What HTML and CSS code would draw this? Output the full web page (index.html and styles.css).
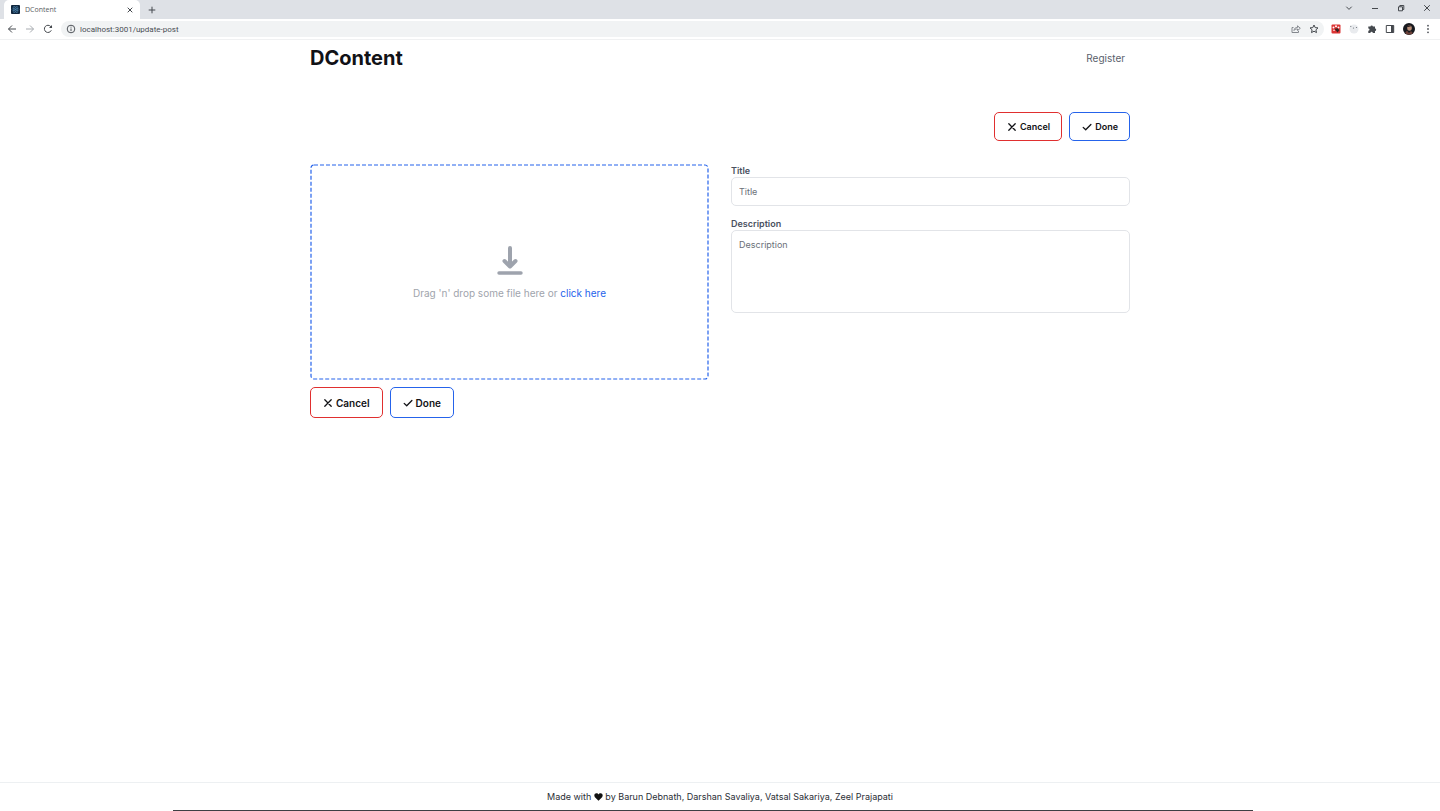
FILE: index.html
```html
<!DOCTYPE html>
<html lang="en">
<head>
<meta charset="utf-8">
<title>DContent</title>
<link rel="stylesheet" href="styles.css">
</head>
<body>
<svg class="defs" aria-hidden="true">
  <symbol id="x" viewBox="0 0 10 10"><path d="M1.8 1.8l6.4 6.4M8.2 1.8L1.8 8.2" fill="none" stroke="currentColor" stroke-width="1.3" stroke-linecap="round"/></symbol>
  <symbol id="check" viewBox="0 0 10 10"><path d="M1.2 5.400l2.500 2.400 5.200-5.300" fill="none" stroke="currentColor" stroke-width="1.3" stroke-linecap="round" stroke-linejoin="round"/></symbol>
</svg>
<div class="browser">
  <div class="tabstrip">
    <div class="tab">
      <svg class="favicon" viewBox="0 0 10 10"><rect width="10" height="10" rx="1" fill="#10263c"/><g fill="none" stroke="#4d84ad" stroke-width=".6"><ellipse cx="5" cy="5" rx="4" ry="1.6"/><ellipse cx="5" cy="5" rx="4" ry="1.6" transform="rotate(60 5 5)"/><ellipse cx="5" cy="5" rx="4" ry="1.6" transform="rotate(120 5 5)"/></g><circle cx="5" cy="5" r=".8" fill="#4d84ad"/></svg>
      <span class="tab-title">DContent</span>
      <button class="icon-btn" aria-label="Close tab"><svg viewBox="0 0 8 8"><path d="M1.700 1.700l4.600 4.600M6.300 1.700L1.700 6.300"/></svg></button>
    </div>
    <button class="icon-btn new-tab" aria-label="New tab"><svg viewBox="0 0 8 8"><path d="M4 .7v6.6M.7 4h6.6"/></svg></button>
    <div class="window-controls">
      <button class="icon-btn" aria-label="Search tabs"><svg viewBox="0 0 8 8"><path d="M1.3 2.7L4 5.4l2.7-2.7"/></svg></button>
      <button class="icon-btn" aria-label="Minimize"><svg viewBox="0 0 8 8"><path d="M1 4.5h6"/></svg></button>
      <button class="icon-btn" aria-label="Restore"><svg viewBox="0 0 8 8"><path d="M1.5 2.8h4v4h-4zM2.8 2.8V1.5h4v4H5.5"/></svg></button>
      <button class="icon-btn" aria-label="Close"><svg viewBox="0 0 8 8"><path d="M1.2 1.2l5.6 5.6M6.8 1.2L1.2 6.8"/></svg></button>
    </div>
  </div>
  <div class="toolbar">
    <div class="nav-btns">
      <button class="icon-btn" aria-label="Back"><svg viewBox="0 0 10 10"><path d="M9 5H1.5M5 1.5L1.5 5 5 8.5"/></svg></button>
      <button class="icon-btn faded" aria-label="Forward"><svg viewBox="0 0 10 10"><path d="M1 5h7.500M5 1.500L8.500 5 5 8.500"/></svg></button>
      <button class="icon-btn" aria-label="Reload"><svg viewBox="0 0 10 10"><path d="M8.300 6.300A3.600 3.600 0 1 1 7.700 2.500L8.600 3.500"/><path d="M9 .9v3H6z" class="solid"/></svg></button>
    </div>
    <div class="address">
      <svg class="info" viewBox="0 0 10 10"><circle cx="5" cy="5" r="3.800"/><path d="M5 4.500v2.600M5 2.700v.9"/></svg>
      <input class="url" aria-label="Address" value="localhost:3001/update-post">
      <button class="icon-btn muted" aria-label="Share"><svg viewBox="0 0 10 10"><path d="M2.500 3.500H1v5h6.500V6.800M3 6.500c.3-2.300 1.500-3 3.500-3V1.800L9.300 4.300 6.500 6.500V5C5 5 4 5.300 3 6.500z"/></svg></button>
      <button class="icon-btn" aria-label="Bookmark"><svg viewBox="0 0 10 10"><path d="M5 1l1.200 2.600 2.800.3-2.100 1.900.6 2.800L5 7.200 2.500 8.600l.6-2.800L1 3.900l2.800-.3z"/></svg></button>
    </div>
    <div class="extensions">
      <button class="icon-btn" aria-label="Paw extension"><svg viewBox="0 0 10 10"><rect class="bare" x=".5" y=".5" width="9" height="9" rx="1" fill="#dc3434"/><g class="bare" fill="#fff"><circle cx="2.500" cy="3.500" r="1"/><circle cx="5" cy="2.300" r="1"/><circle cx="7.500" cy="3.500" r="1"/><circle cx="3" cy="6.300" r=".8"/></g><path class="bare" d="M3.500 4.700l3.500-.4 1.300 2-1.800 2.200-1-1.300z" fill="#3a2422"/></svg></button>
      <button class="icon-btn" aria-label="Cookie extension"><svg viewBox="0 0 10 10"><circle class="bare" cx="5" cy="5" r="4.500" fill="#e9ebee"/><g class="bare" fill="#6b7178"><circle cx="1.800" cy="2.300" r=".6"/><circle cx="4.500" cy="4" r=".6"/><circle cx="7.500" cy="3.500" r=".6"/></g></svg></button>
      <button class="icon-btn" aria-label="Extensions"><svg viewBox="0 0 10 10"><path class="solid" d="M1.300 2.600h2.200a1.200 1.200 0 1 1 2.400 0H8v2a1.200 1.200 0 1 1 0 2.400v2H5.800a1.200 1.200 0 0 0-2.400 0H1.300V6.800a1.200 1.200 0 0 0 0-2.400z"/></svg></button>
      <button class="icon-btn" aria-label="Side panel"><svg viewBox="0 0 10 10"><path d="M1.300 1.500h7.400v7H1.300z"/><path class="solid" d="M6 1.500h2.700v7H6z"/></svg></button>
      <button class="icon-btn avatar" aria-label="Profile"><svg viewBox="0 0 12 12"><circle class="bare" cx="6" cy="6" r="6" fill="#17191e"/><ellipse class="bare" cx="6.500" cy="5" rx="2.300" ry="2.800" fill="#b98f78"/><path class="bare" d="M2 10l2-2.500L6 10l2-2 2 2.200A6 6 0 0 1 2 10z" fill="#6b4038"/><path class="bare" d="M3.500 4Q5 1 9 3L5.500 4z" fill="#2a2020"/></svg></button>
      <button class="icon-btn" aria-label="Menu"><svg viewBox="0 0 10 10"><g class="bare" fill="#50545a"><circle cx="5" cy="1.700" r=".9"/><circle cx="5" cy="5" r=".9"/><circle cx="5" cy="8.300" r=".9"/></g></svg></button>
    </div>
  </div>
</div>

<header class="container site-header">
  <h1 class="brand">DContent</h1>
  <a class="register" href="#">Register</a>
</header>

<main class="container main">
  <div class="actions actions-top">
    <button class="btn btn-cancel"><svg><use href="#x"/></svg>Cancel</button>
    <button class="btn btn-done"><svg><use href="#check"/></svg>Done</button>
  </div>
  <div class="columns">
    <div class="dropzone">
      <svg class="dash" aria-hidden="true"><rect width="100%" height="100%" rx="3"/></svg>
      <svg class="download" viewBox="0 0 26 30"><path d="M13 3v18M7.500 16l5.500 5.500 5.500-5.500" stroke-width="4"/><path d="M2 28h22" stroke-width="3.400"/></svg>
      <p class="hint">Drag 'n' drop some file here or <a href="#">click here</a></p>
    </div>
    <form class="form">
      <label for="title">Title</label>
      <input id="title" class="field" placeholder="Title">
      <label for="description">Description</label>
      <textarea id="description" class="field area" placeholder="Description"></textarea>
    </form>
  </div>
  <div class="actions actions-bottom">
    <button class="btn btn-cancel"><svg><use href="#x"/></svg>Cancel</button>
    <button class="btn btn-done"><svg><use href="#check"/></svg>Done</button>
  </div>
</main>

<footer class="footer">
  <p class="credits">Made with <svg class="heart" viewBox="0 0 10 9" role="img" aria-label="love"><path d="M5 8.700L1 4.700C-.6 2.600.8.4 2.700.4 3.800.4 4.600 1 5 1.800 5.400 1 6.200.4 7.300.4 9.200.4 10.600 2.600 9 4.700z"/></svg> by Barun Debnath, Darshan Savaliya, Vatsal Sakariya, Zeel Prajapati</p>
  <div class="edge"></div>
</footer>
</body>
</html>
```
FILE: styles.css
```css
* { box-sizing: border-box; }
body {
  margin: 0;
  min-height: 100vh;
  display: flex;
  flex-direction: column;
  background: #fff;
  color: #111216;
  font-family: Inter, "Liberation Sans", sans-serif;
}
button, input, textarea { font: inherit; color: inherit; }
h1, p { margin: 0; }
a { text-decoration: none; }
.defs { display: none; }

/* Browser chrome */
.browser { border-bottom: 1px solid #f0f1f2; font-family: "Open Sans", "Noto Sans", sans-serif; }
.tabstrip {
  display: flex;
  align-items: center;
  height: 19px;
  padding-left: 4px;
  background: #dee1e6;
}
.tab {
  display: flex;
  align-items: center;
  gap: 5px;
  width: 136px;
  height: 19px;
  padding: 0 6px 0 7px;
  border-radius: 5px 5px 0 0;
  background: #fff;
}
.favicon { width: 9px; height: 9px; }
.tab-title { flex: 1; font-size: 7px; color: #5a5e64; }
.icon-btn {
  display: flex;
  padding: 0;
  border: 0;
  background: none;
  color: #45494e;
}
.icon-btn svg { width: 8px; height: 8px; fill: none; stroke: currentColor; stroke-width: 1; }
.icon-btn .solid { fill: currentColor; stroke: none; }
.icon-btn .bare { stroke: none; }
.new-tab { margin-left: 8px; }
.window-controls {
  display: flex;
  gap: 18px;
  margin: 0 9px 3px auto;
}
.toolbar { display: flex; align-items: center; height: 20px; padding: 0 7px; }
.toolbar .icon-btn svg { width: 10px; height: 10px; }
.nav-btns { display: flex; gap: 8px; }
.faded { color: #a7abb0; }
.muted { color: #84888e; }
.address {
  display: flex;
  align-items: center;
  flex: 1;
  gap: 8px;
  height: 16px;
  margin: 0 7px 0 8px;
  padding: 0 5px;
  border-radius: 8px;
  background: #f1f3f4;
}
.info { width: 10px; height: 10px; margin-right: -4px; fill: none; stroke: #50545a; stroke-width: 1; }
.url {
  flex: 1;
  min-width: 0;
  padding: 0;
  border: 0;
  background: none;
  font-family: Roboto, sans-serif;
  font-size: 8px;
  color: #4a4e54;
}
.extensions { display: flex; align-items: center; gap: 8px; }
.toolbar .avatar svg { width: 12px; height: 12px; }

/* Page */
.container { width: 100%; max-width: 820px; margin: 0 auto; }
.site-header {
  display: flex;
  align-items: center;
  justify-content: space-between;
  height: 36px;
  padding-right: 5px;
}
.brand { font-size: 20px; line-height: 24px; font-weight: 700; }
.register { font-size: 10px; color: #5a616c; }
.main { flex: 1; padding-top: 36px; }
.actions { display: flex; gap: 7px; }
.actions-top { justify-content: flex-end; font-size: 9px; }
.actions-bottom { padding-top: 7px; font-size: 10px; }
.btn {
  display: flex;
  align-items: center;
  gap: 3px;
  height: 29px;
  padding: 0 11px 0 12px;
  border: 1px solid;
  border-radius: 5px;
  background: #fff;
  font-weight: 600;
}
.actions-bottom .btn { height: 31px; padding: 0 12px; }
.btn svg { width: 10px; height: 10px; }
.btn-cancel { border-color: #e02f2f; }
.btn-done { border-color: #2563eb; }
.columns {
  display: grid;
  grid-template-columns: 1fr 1fr;
  gap: 22px;
  padding-top: 23px;
}
.dropzone {
  position: relative;
  display: flex;
  flex-direction: column;
  align-items: center;
  justify-content: center;
  gap: 11px;
  height: 216px;
}
.dash {
  position: absolute;
  inset: 0;
  width: 100%;
  height: 100%;
  padding: 1px;
  overflow: visible;
  pointer-events: none;
}
.dash rect { fill: none; stroke: #2563eb; stroke-width: 1.2; stroke-dasharray: 4 2; }
.download { width: 26px; height: 30px; fill: none; stroke: #9ea3ad; stroke-linecap: round; stroke-linejoin: round; }
.hint { font-size: 10px; line-height: 14px; color: #a0a4ac; }
.hint a { color: #2563eb; }
.form { display: flex; flex-direction: column; }
.form label { padding-top: 1px; font-size: 9px; line-height: 12px; font-weight: 600; color: #4a5160; }
.field {
  width: 100%;
  height: 29px;
  margin-bottom: 11px;
  padding: 0 7px;
  border: 1px solid #e2e4e8;
  border-radius: 5px;
  background: #fff;
  font-size: 9px;
}
.field::placeholder { color: #6b7078; opacity: 1; }
.area { height: 83px; margin: 0; padding: 7px; line-height: 13px; resize: none; }
.footer { border-top: 1px solid #edf0f2; }
.credits { padding: 7px 0 6px; text-align: center; font-size: 9px; line-height: 14px; color: #2a2e36; }
.heart { width: 9px; height: 8px; vertical-align: -1px; fill: #111; }
.edge { width: 75%; height: 1px; margin-left: 12%; background: #3e4044; }
```
